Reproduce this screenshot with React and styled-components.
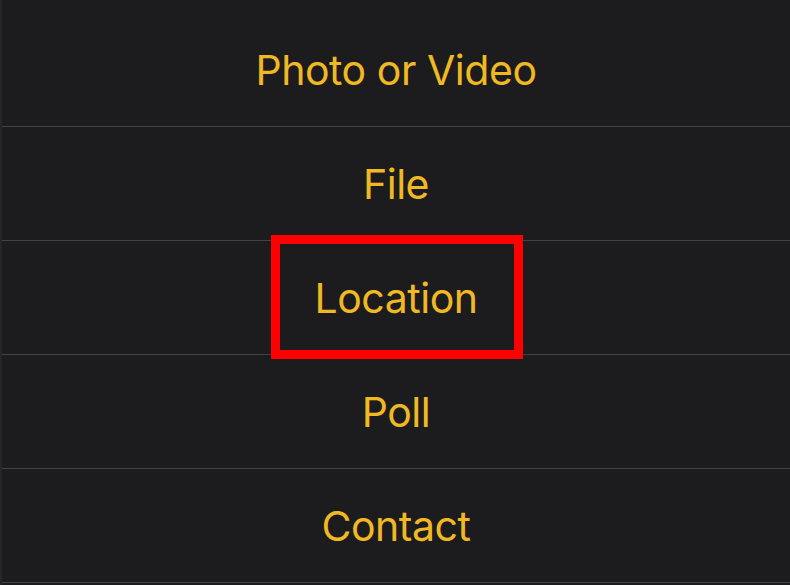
import styled, { createGlobalStyle } from 'styled-components';

const GlobalStyle = createGlobalStyle`
  html, body {
    margin: 0;
    padding: 0;
    background: #1c1c1e;
  }
  body {
    font-family: Inter, "Noto Sans", sans-serif;
  }
`;

const items = ['Photo or Video', 'File', 'Location', 'Poll', 'Contact'];

export default function App() {
  return (
    <>
      <GlobalStyle />
      <Sheet>
        <TopGap />
        {items.map((label) => (
          <Row key={label}>
            {label === 'Location' ? (
              <Marked>
                <Label>{label}</Label>
              </Marked>
            ) : (
              <Label>{label}</Label>
            )}
          </Row>
        ))}
      </Sheet>
    </>
  );
}

const Sheet = styled.div`
  width: 790px;
  height: 585px;
  overflow: hidden;
  display: flex;
  flex-direction: column;
  background: #1c1c1e;
  border-left: 2px solid #262628;
  box-sizing: border-box;
`;

const TopGap = styled.div`
  height: 13px;
  flex: none;
`;

const Row = styled.div`
  flex: none;
  height: 113px;
  display: flex;
  align-items: center;
  justify-content: center;
  border-bottom: 1px solid #424245;
`;

const Label = styled.span`
  color: #f0b924;
  font-size: 41px;
  font-weight: 400;
  letter-spacing: -0.45px;
  line-height: 1;
  padding-top: 2px;
`;

const Marked = styled.div`
  position: relative;
  display: flex;
  align-items: center;
  justify-content: center;

  &::after {
    content: '';
    position: absolute;
    left: 50%;
    top: 50%;
    width: 252px;
    height: 124px;
    margin-left: -125px;
    margin-top: -63px;
    box-sizing: border-box;
    border: 9px solid #ff0000;
  }
`;
